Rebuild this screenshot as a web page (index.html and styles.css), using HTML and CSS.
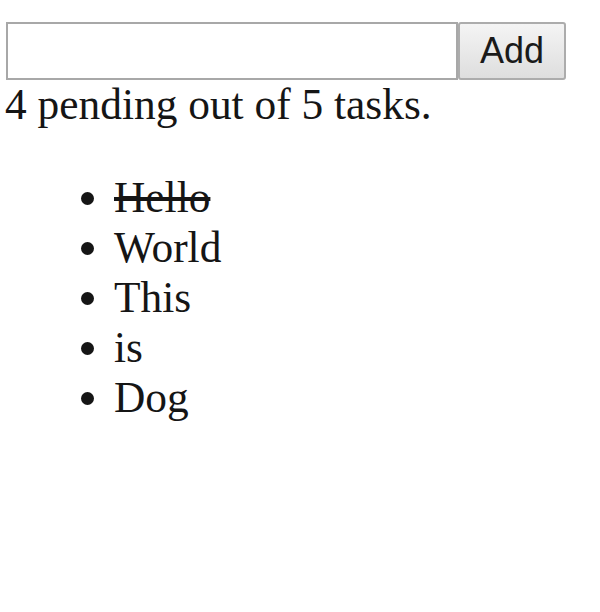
FILE: index.html
```html
<!DOCTYPE html>
<html>
<head>
<meta charset="utf-8">
<link rel="stylesheet" href="styles.css">
</head>
<body>
<div class="app">
  <form class="add-form">
    <input class="task-input" type="text">
    <button class="add-btn" type="button">Add</button>
  </form>
  <div class="summary">4 pending out of 5 tasks.</div>
  <ul class="tasks">
    <li class="done">Hello</li>
    <li>World</li>
    <li>This</li>
    <li>is</li>
    <li>Dog</li>
  </ul>
</div>
</body>
</html>
```
FILE: styles.css
```css
html, body {
  margin: 0;
  padding: 0;
  background: #fff;
}
body {
  padding: 22px 0 0 5px;
  font-family: "Liberation Serif", "Times New Roman", serif;
  font-size: 43.4px;
  color: #151515;
}
.add-form {
  display: flex;
  margin: 0 0 0 1px;
}
.task-input {
  box-sizing: border-box;
  width: 452px;
  height: 58px;
  border: 2px solid #a8a8a8;
  margin: 0;
  padding: 0 6px;
  font-size: 36px;
  background: #fff;
}
.add-btn {
  box-sizing: border-box;
  width: 108px;
  height: 58px;
  margin: 0;
  border: 2px solid #acacac;
  border-radius: 3px;
  background: linear-gradient(#f4f4f4, #dedede);
  font-family: "Liberation Sans", Arial, sans-serif;
  font-size: 36px;
  color: #1a1a1a;
  padding: 0;
}
.summary {
  line-height: 48px;
}
.tasks {
  margin: 44px 0 0 0;
  padding-left: 109px;
}
.tasks li {
  line-height: 50px;
}
.done {
  text-decoration: line-through;
}
```
